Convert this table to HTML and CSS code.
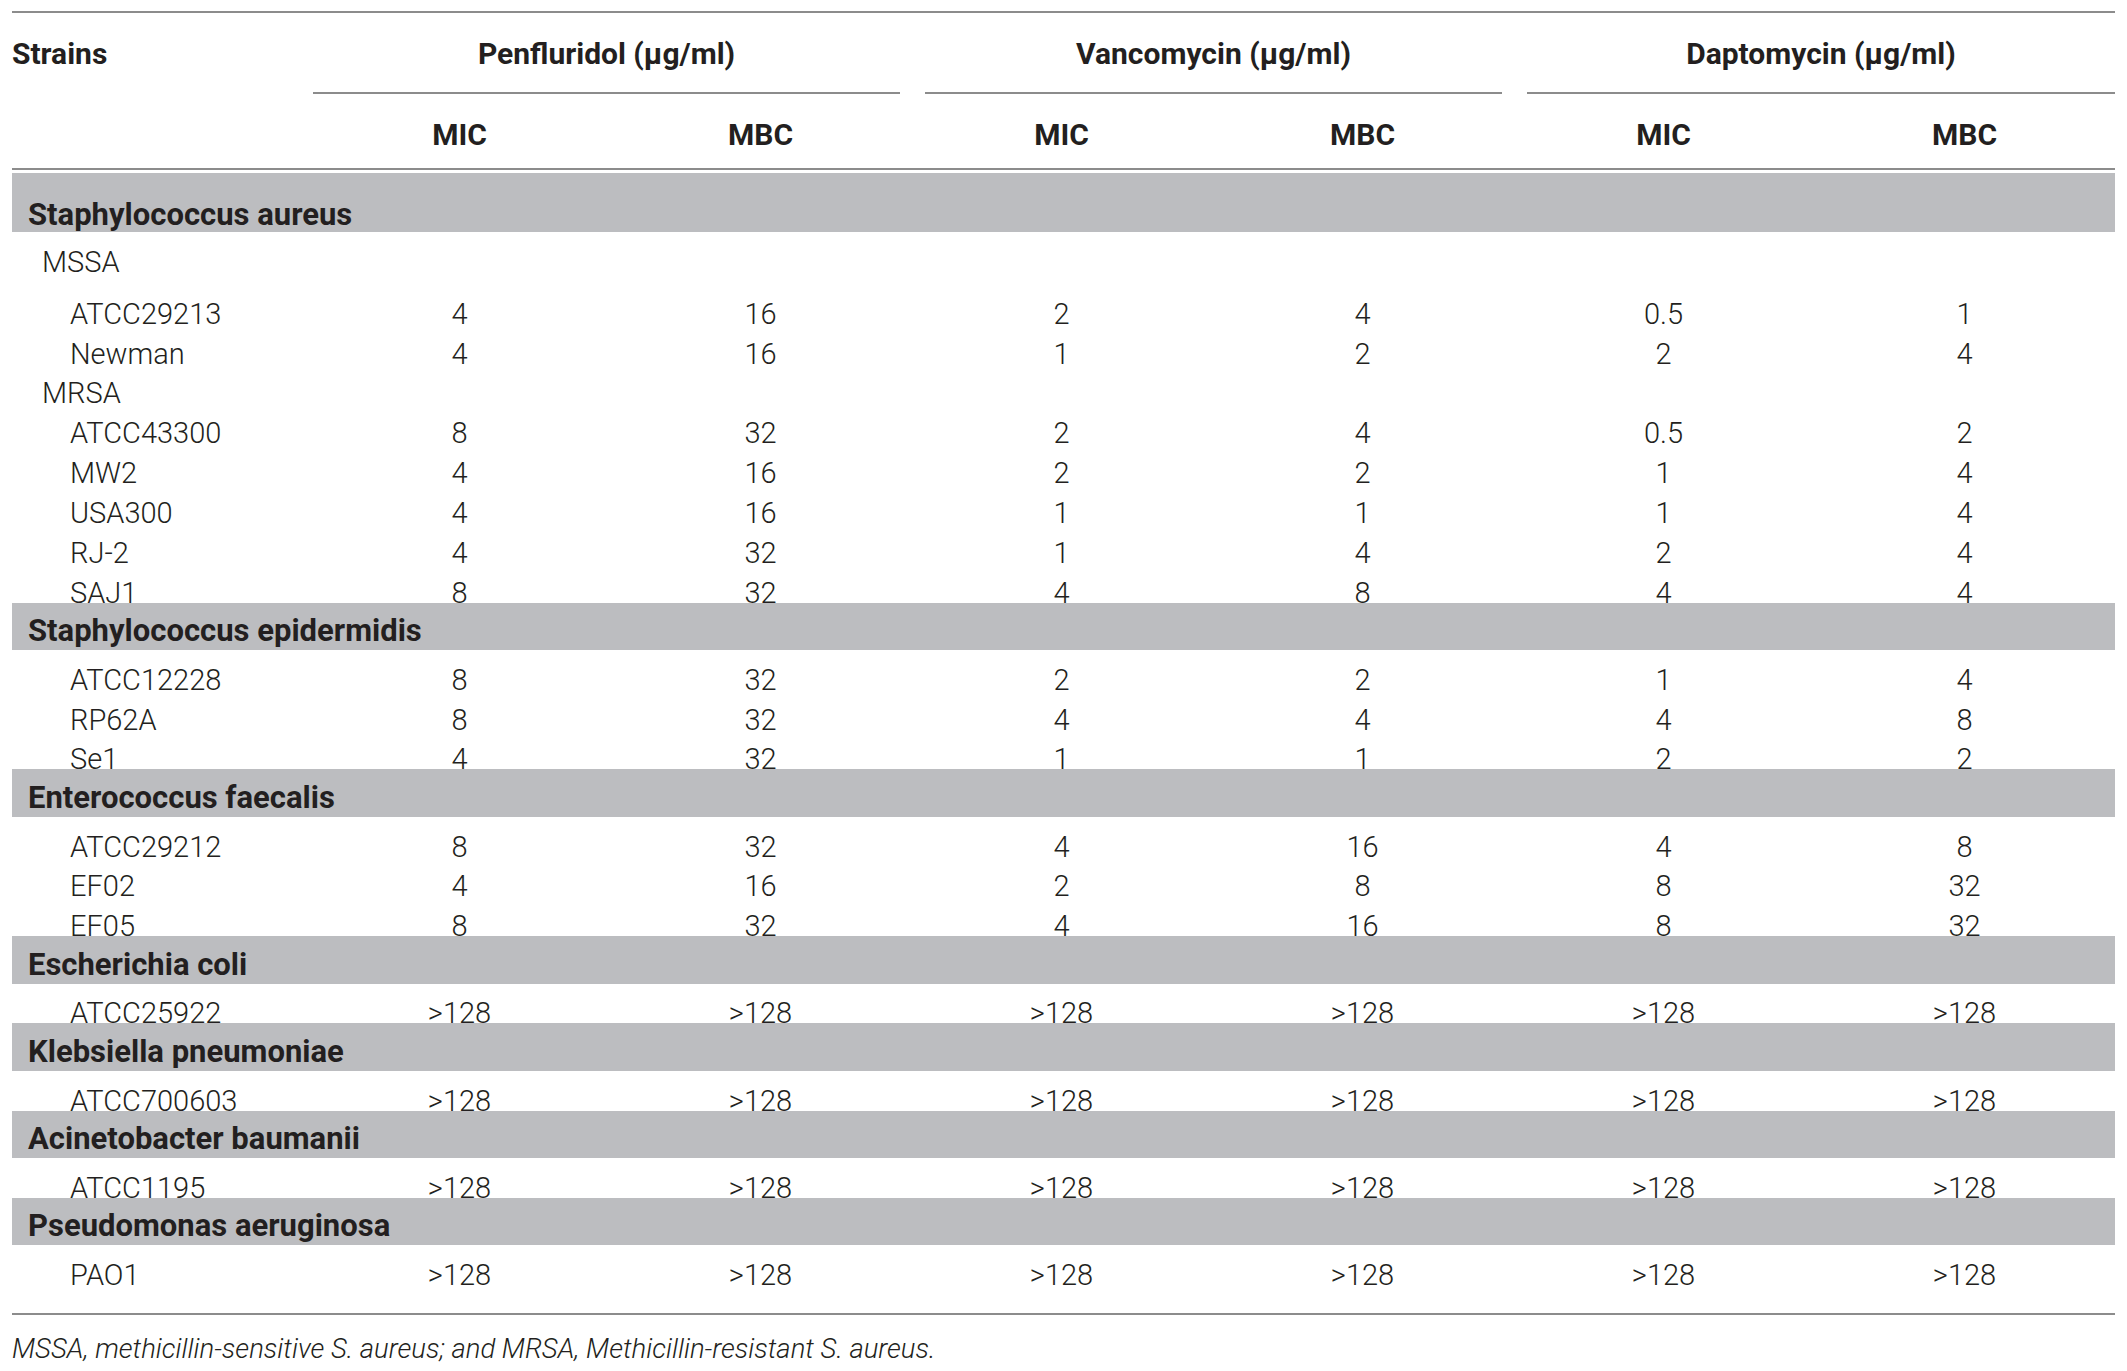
FILE: index.html
```
<!DOCTYPE html>
<html lang="en">
<head>
    <meta charset="UTF-8">
    <meta name="viewport" content="width=device-width, initial-scale=1.0">
    <title>Penfluridol MIC and MBC</title>
    <link rel="stylesheet" href="styles.css">
</head>
<body>
    <div class="table">
        <div class="thead">
            <div class="th strains">Strains</div>
            <div class="th group first">Penfluridol (&mu;g/ml)</div>
            <div class="th group">Vancomycin (&mu;g/ml)</div>
            <div class="th group last">Daptomycin (&mu;g/ml)</div>
            <div class="th sub">MIC</div>
            <div class="th sub">MBC</div>
            <div class="th sub">MIC</div>
            <div class="th sub">MBC</div>
            <div class="th sub">MIC</div>
            <div class="th sub">MBC</div>
        </div>

        <div class="tbody">
            <div class="band top">Staphylococcus aureus</div>
            <div class="row kind gap"><div class="name">MSSA</div></div>
            <div class="row"><div class="name">ATCC29213</div><div>4</div><div>16</div><div>2</div><div>4</div><div>0.5</div><div>1</div></div>
            <div class="row"><div class="name">Newman</div><div>4</div><div>16</div><div>1</div><div>2</div><div>2</div><div>4</div></div>
            <div class="row kind"><div class="name">MRSA</div></div>
            <div class="row"><div class="name">ATCC43300</div><div>8</div><div>32</div><div>2</div><div>4</div><div>0.5</div><div>2</div></div>
            <div class="row"><div class="name">MW2</div><div>4</div><div>16</div><div>2</div><div>2</div><div>1</div><div>4</div></div>
            <div class="row"><div class="name">USA300</div><div>4</div><div>16</div><div>1</div><div>1</div><div>1</div><div>4</div></div>
            <div class="row"><div class="name">RJ-2</div><div>4</div><div>32</div><div>1</div><div>4</div><div>2</div><div>4</div></div>
            <div class="row"><div class="name">SAJ1</div><div>8</div><div>32</div><div>4</div><div>8</div><div>4</div><div>4</div></div>

            <div class="band">Staphylococcus epidermidis</div>
            <div class="row"><div class="name">ATCC12228</div><div>8</div><div>32</div><div>2</div><div>2</div><div>1</div><div>4</div></div>
            <div class="row"><div class="name">RP62A</div><div>8</div><div>32</div><div>4</div><div>4</div><div>4</div><div>8</div></div>
            <div class="row"><div class="name">Se1</div><div>4</div><div>32</div><div>1</div><div>1</div><div>2</div><div>2</div></div>

            <div class="band">Enterococcus faecalis</div>
            <div class="row"><div class="name">ATCC29212</div><div>8</div><div>32</div><div>4</div><div>16</div><div>4</div><div>8</div></div>
            <div class="row"><div class="name">EF02</div><div>4</div><div>16</div><div>2</div><div>8</div><div>8</div><div>32</div></div>
            <div class="row"><div class="name">EF05</div><div>8</div><div>32</div><div>4</div><div>16</div><div>8</div><div>32</div></div>

            <div class="band">Escherichia coli</div>
            <div class="row"><div class="name">ATCC25922</div><div>&gt;128</div><div>&gt;128</div><div>&gt;128</div><div>&gt;128</div><div>&gt;128</div><div>&gt;128</div></div>

            <div class="band">Klebsiella pneumoniae</div>
            <div class="row"><div class="name">ATCC700603</div><div>&gt;128</div><div>&gt;128</div><div>&gt;128</div><div>&gt;128</div><div>&gt;128</div><div>&gt;128</div></div>

            <div class="band">Acinetobacter baumanii</div>
            <div class="row"><div class="name">ATCC1195</div><div>&gt;128</div><div>&gt;128</div><div>&gt;128</div><div>&gt;128</div><div>&gt;128</div><div>&gt;128</div></div>

            <div class="band">Pseudomonas aeruginosa</div>
            <div class="row"><div class="name">PAO1</div><div>&gt;128</div><div>&gt;128</div><div>&gt;128</div><div>&gt;128</div><div>&gt;128</div><div>&gt;128</div></div>
        </div>

        <p class="note">MSSA, methicillin-sensitive S. aureus; and MRSA, Methicillin-resistant S. aureus.</p>
    </div>
</body>
</html>
```

FILE: styles.css
```
body {
    margin: 0;
    padding: 0;
    background: #fff;
    color: #231f20;
    font-family: Roboto, "Liberation Sans", Arial, sans-serif;
}
.table {
    width: 2103px;
    margin: 11px 12px 0;
}
.thead {
    display: grid;
    grid-template-columns: 297px repeat(6, 301px);
    border-top: 2px solid #8c8c8c;
    border-bottom: 2px solid #8c8c8c;
    font-weight: 700;
    font-size: 30px;
    line-height: 32px;
}
.th {
    text-align: center;
}
.strains {
    grid-row: 1 / 3;
    text-align: left;
    padding-top: 25px;
}
.group {
    grid-column: span 2;
    padding: 25px 0 22px;
    margin: 0 11px 0 14px;
    border-bottom: 2px solid #8c8c8c;
}
.group.first {
    margin-left: 4px;
}
.group.last {
    margin-right: 0;
}
.sub {
    padding: 25px 0 17px;
}
.band {
    display: flex;
    align-items: flex-end;
    box-sizing: border-box;
    height: 47.3px;
    padding: 0 0 9px 16px;
    background: #bcbdc0;
    font-weight: 700;
    font-size: 31px;
    line-height: 20px;
}
.band.top {
    margin-top: 3px;
    height: 59px;
    padding-bottom: 7px;
}
.row {
    display: grid;
    grid-template-columns: 297px repeat(6, 301px);
    align-items: end;
    height: 39.85px;
    font-weight: 300;
    font-size: 29px;
    line-height: 20px;
    text-align: center;
}
.row .name {
    text-align: left;
    padding-left: 58px;
}
.row.kind .name {
    padding-left: 30px;
}
.row.gap {
    margin-bottom: 12px;
}
.tbody {
    padding-bottom: 28px;
    border-bottom: 2px solid #8c8c8c;
}
.note {
    margin: 17px 0 0;
    font-style: italic;
    font-weight: 300;
    font-size: 27.5px;
}
```
